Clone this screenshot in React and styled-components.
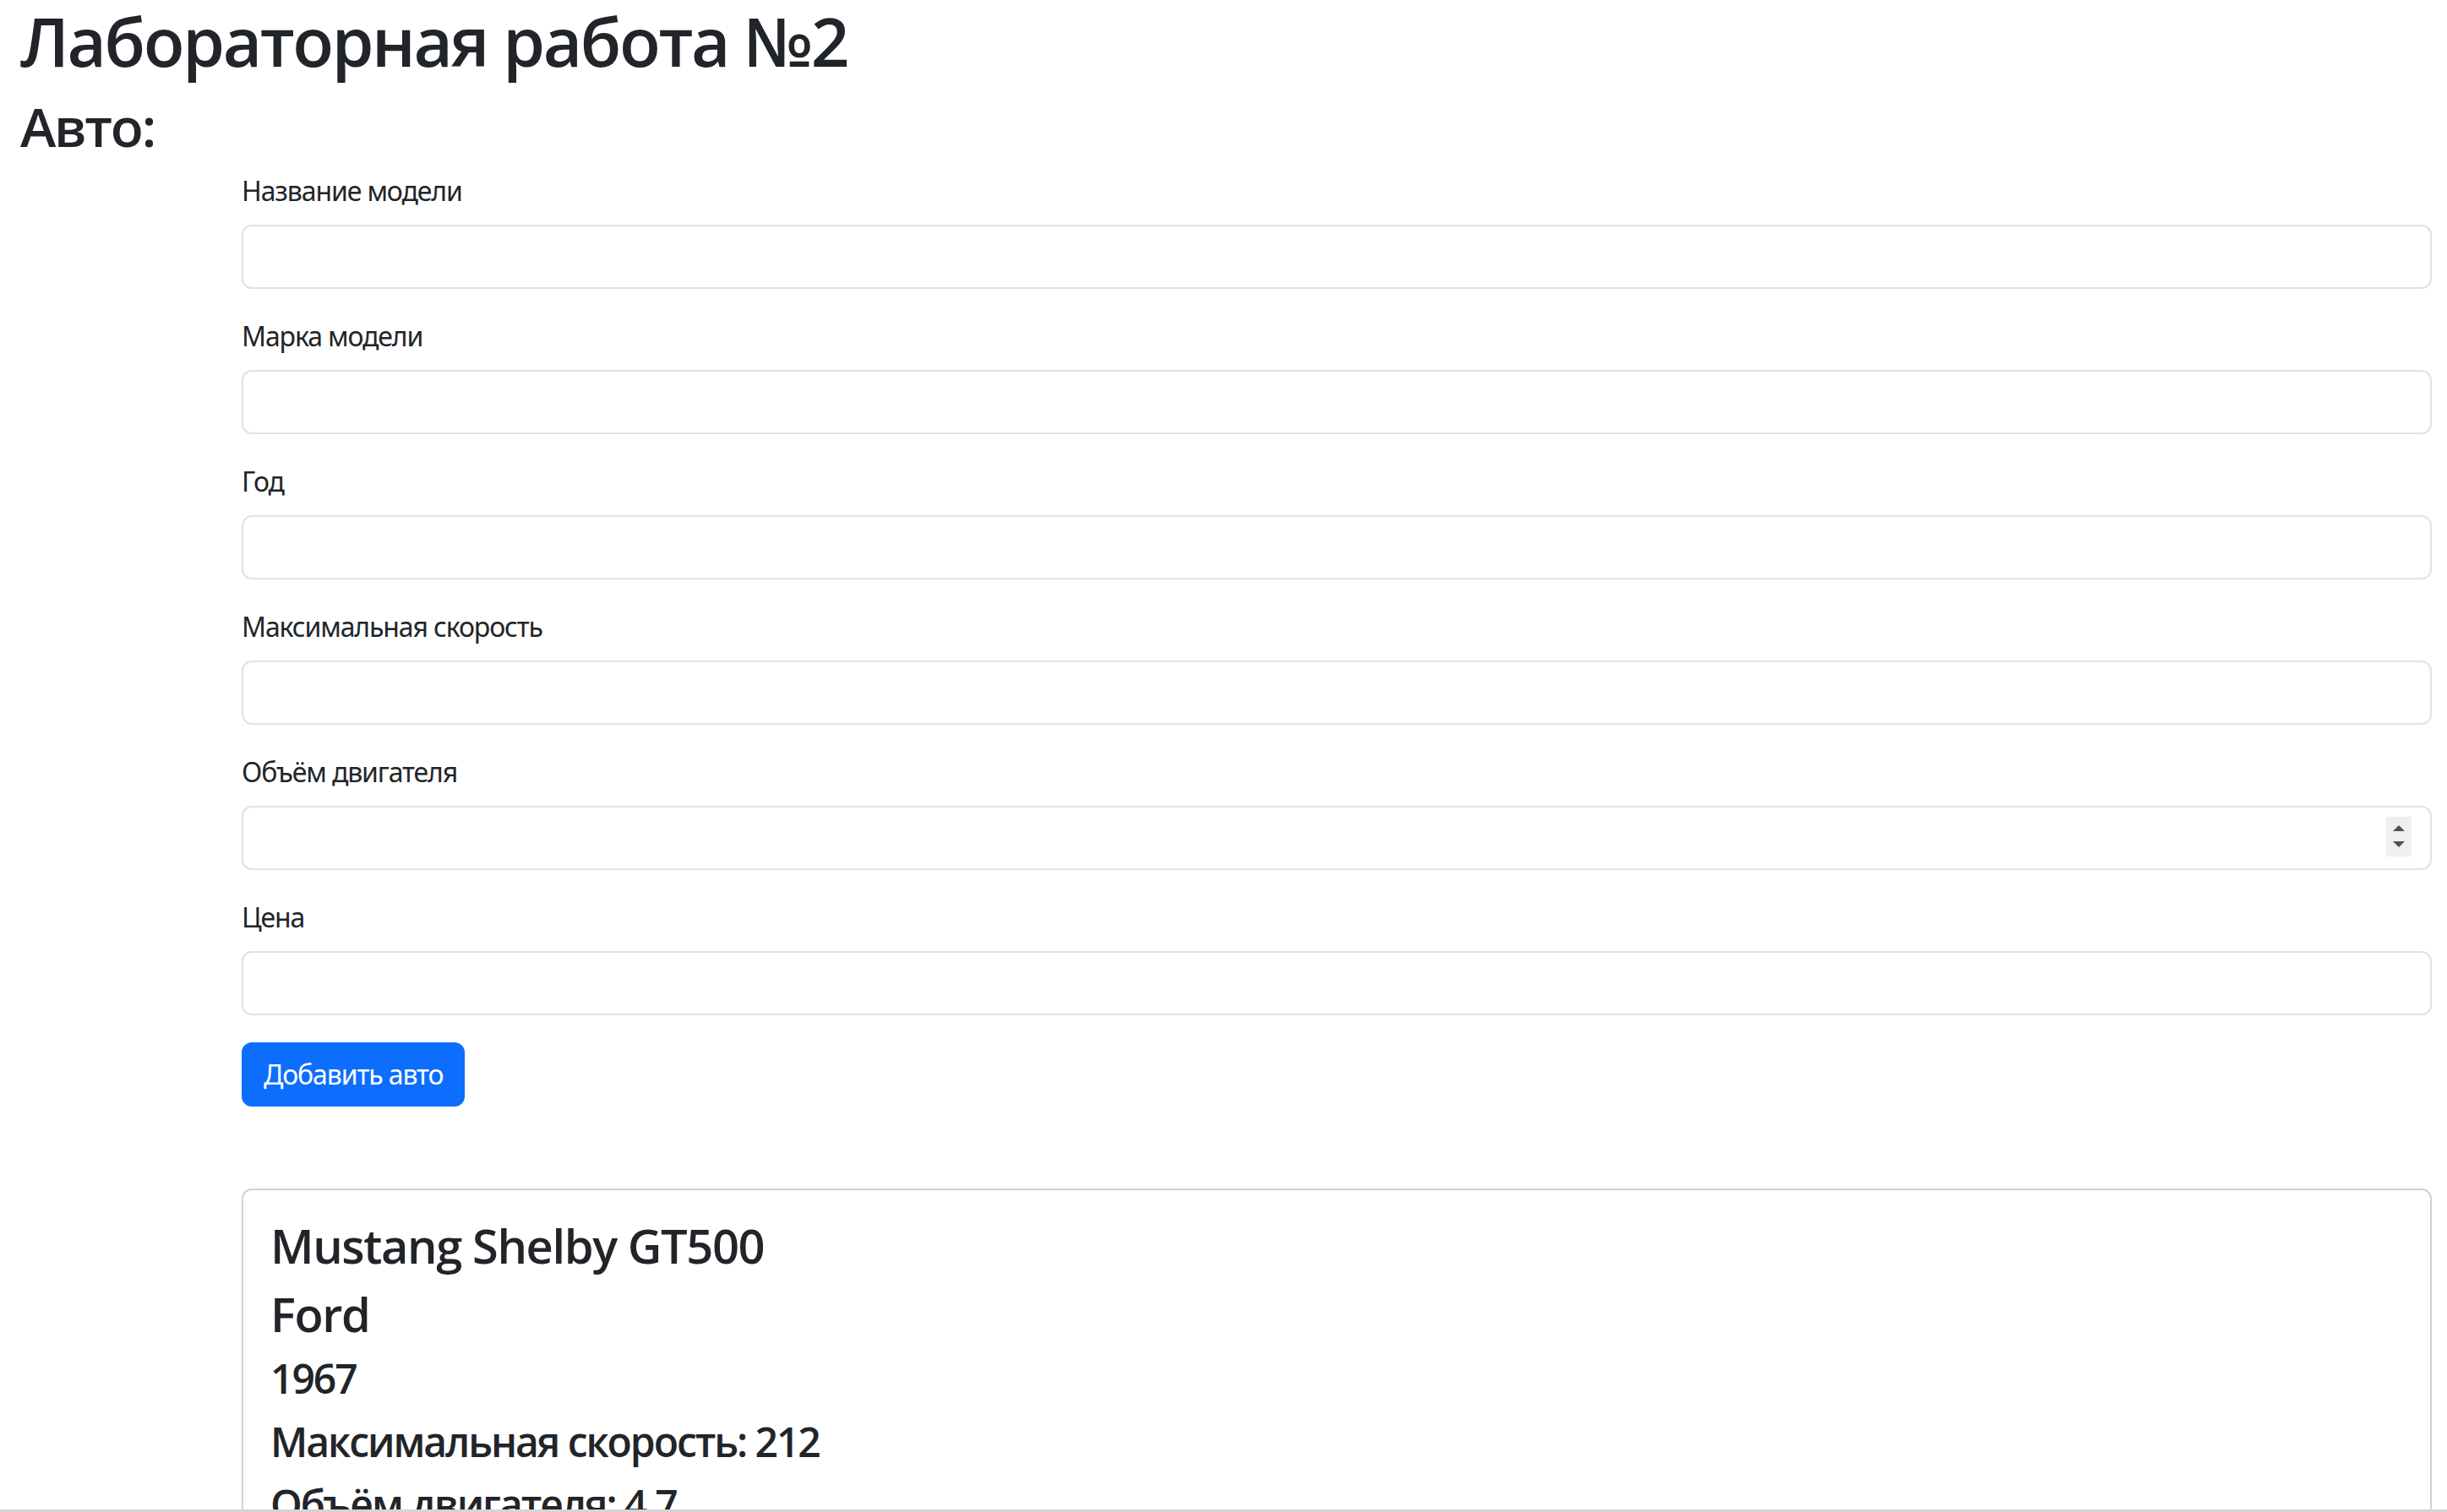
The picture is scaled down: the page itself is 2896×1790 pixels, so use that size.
import styled, { createGlobalStyle } from 'styled-components';

const GlobalStyle = createGlobalStyle`
  html, body {
    margin: 0;
    padding: 0;
    background: #fff;
  }
  body {
    font-family: "Noto Sans", "Open Sans", sans-serif;
    color: #212529;
  }
`;

const fields = [
  { label: 'Название модели' },
  { label: 'Марка модели' },
  { label: 'Год' },
  { label: 'Максимальная скорость' },
  { label: 'Объём двигателя', number: true },
  { label: 'Цена' },
];

function App() {
  return (
    <>
      <GlobalStyle />
      <Page>
        <Title>Лабораторная работа №2</Title>
        <Subtitle>Авто:</Subtitle>
        <Form>
          {fields.map((f) => (
            <Group key={f.label}>
              <Label>{f.label}</Label>
              <InputWrap>
                <Input type="text" />
                {f.number && (
                  <Spinner>
                    <Arrow $up />
                    <Arrow />
                  </Spinner>
                )}
              </InputWrap>
            </Group>
          ))}
          <Button type="button">Добавить авто</Button>
        </Form>
        <CarList>
          <Card>
            <CarName>Mustang Shelby GT500</CarName>
            <CarName>Ford</CarName>
            <CarInfo>1967</CarInfo>
            <CarInfo>Максимальная скорость: 212</CarInfo>
            <CarInfo>Объём двигателя: 4.7</CarInfo>
            <CarInfo>Цена: 3000000</CarInfo>
          </Card>
        </CarList>
      </Page>
    </>
  );
}

const Page = styled.div`
  height: 100vh;
  overflow: hidden;
  box-sizing: border-box;
  padding: 0 18px 0 24px;
  border-bottom: 3px solid #d4d4d4;
`;

const Heading = `
  font-family: "Open Sans", "Noto Sans", sans-serif;
  font-weight: 600;
  line-height: 1.2;
`;

const Title = styled.h1`
  ${Heading}
  font-size: 80px;
  letter-spacing: -0.03em;
  margin: 0 0 16px;
`;

const Subtitle = styled.h2`
  ${Heading}
  font-size: 64px;
  letter-spacing: -0.035em;
  margin: 0 0 13px;
`;

const Form = styled.form`
  margin-left: 262px;
`;

const Group = styled.div`
  margin-bottom: 32px;
`;

const Label = styled.label`
  display: block;
  font-size: 32px;
  line-height: 48px;
  letter-spacing: -0.035em;
  margin-bottom: 16px;
`;

const InputWrap = styled.div`
  position: relative;
`;

const Input = styled.input`
  display: block;
  width: 100%;
  height: 76px;
  box-sizing: border-box;
  padding: 12px 24px;
  font-size: 32px;
  font-family: inherit;
  border: 2px solid #dee2e6;
  border-radius: 12px;
  background: #fff;
  outline: none;
`;

const Spinner = styled.div`
  position: absolute;
  right: 24px;
  top: 13px;
  width: 30px;
  height: 47px;
  background: #efefef;
  display: flex;
  flex-direction: column;
  align-items: center;
  justify-content: center;
  gap: 12px;
`;

const Arrow = styled.span`
  width: 0;
  height: 0;
  border-left: 7px solid transparent;
  border-right: 7px solid transparent;
  ${(p) => (p.$up ? 'border-bottom: 7px solid #505050;' : 'border-top: 7px solid #505050;')}
`;

const Button = styled.button`
  height: 76px;
  padding: 0 24px;
  font-family: inherit;
  font-size: 32px;
  letter-spacing: -0.035em;
  color: #fff;
  background: #0d6efd;
  border: 2px solid #0d6efd;
  border-radius: 12px;
  margin-bottom: 97px;
`;

const CarList = styled.div`
  margin-left: 262px;
`;

const Card = styled.div`
  border: 2px solid rgba(0, 0, 0, 0.175);
  border-radius: 12px;
  padding: 32px;
`;

const CarName = styled.h3`
  ${Heading}
  font-size: 56px;
  letter-spacing: -0.025em;
  margin: 0 0 14px;
`;

const CarInfo = styled.h4`
  ${Heading}
  font-size: 48px;
  letter-spacing: -0.043em;
  margin: 0 0 17px;
`;

export default App;
